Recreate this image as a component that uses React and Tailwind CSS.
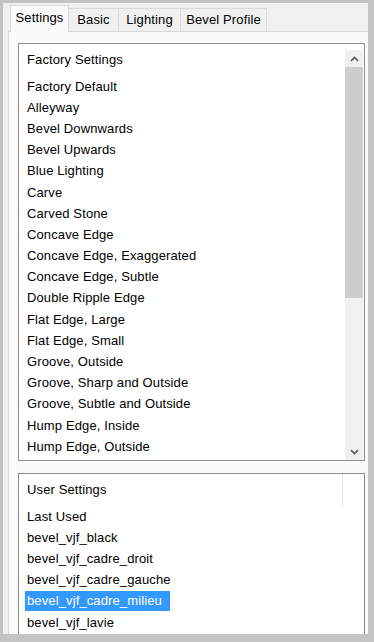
import React from "react";

const factory = [
  "Factory Default",
  "Alleyway",
  "Bevel Downwards",
  "Bevel Upwards",
  "Blue Lighting",
  "Carve",
  "Carved Stone",
  "Concave Edge",
  "Concave Edge, Exaggerated",
  "Concave Edge, Subtle",
  "Double Ripple Edge",
  "Flat Edge, Large",
  "Flat Edge, Small",
  "Groove, Outside",
  "Groove, Sharp and Outside",
  "Groove, Subtle and Outside",
  "Hump Edge, Inside",
  "Hump Edge, Outside",
];

const user = [
  "Last Used",
  "bevel_vjf_black",
  "bevel_vjf_cadre_droit",
  "bevel_vjf_cadre_gauche",
  "bevel_vjf_cadre_milieu",
  "bevel_vjf_lavie",
];

const tabs = ["Settings", "Basic", "Lighting", "Bevel Profile"];

function Chevron({ down }) {
  return (
    <svg width="9" height="6" viewBox="0 0 9 6" className="block">
      <path
        d={down ? "M1 1.2 L4.5 4.6 L8 1.2" : "M1 4.8 L4.5 1.4 L8 4.8"}
        fill="none"
        stroke="#606060"
        strokeWidth="1.8"
      />
    </svg>
  );
}

function Row({ text, selected }) {
  return (
    <div className="h-[21.2px] flex items-center pl-[6px] whitespace-nowrap">
      <span
        className={
          selected
            ? "bg-[#3399ff] text-white pl-[2px] pr-[8px] leading-[20px]"
            : "pl-[2px] leading-[20px]"
        }
      >
        {text}
      </span>
    </div>
  );
}

export default function App() {
  return (
    <div
      className="w-[374px] h-[642px] bg-[#c3c3c3] pl-[3px] pt-[3px] pr-[6px] pb-[8px] text-[13px] tracking-[0.12px] text-black"
      style={{ fontFamily: '"Liberation Sans", Arial, sans-serif' }}
    >
      <div className="h-full bg-[#f0f0f0] flex flex-col overflow-hidden">
        <div className="flex items-end pl-[7px] h-[28px] shrink-0">
          {tabs.map((t, i) =>
            i === 0 ? (
              <div
                key={t}
                className="relative z-10 -mb-px h-[27px] w-[59px] flex items-center justify-center pb-[3px] bg-[#fafafa] border border-b-0 border-[#d9d9d9]"
              >
                {t}
              </div>
            ) : (
              <div
                key={t}
                className="h-[23px] flex items-center justify-center border border-l-0 border-b-0 border-[#d9d9d9] bg-[#f0f0f0]"
                style={{ width: [0, 50, 62, 86][i] }}
              >
                {t}
              </div>
            )
          )}
        </div>

        <div className="ml-[5px] flex-1 min-h-0 bg-[#fafafa] border-l border-t border-[#d9d9d9] pl-[9px] pr-[3px] pt-[11px] flex flex-col gap-[12px] overflow-hidden">
          <div className="h-[418px] shrink-0 border border-[#8c8c8c] bg-white flex">
            <div className="flex-1 overflow-hidden">
              <div className="h-[32px] flex items-center pl-[8px]">Factory Settings</div>
              {factory.map((t) => (
                <Row key={t} text={t} />
              ))}
            </div>
            <div className="w-[18px] mr-[1px] pt-[6px] flex flex-col">
              <div className="h-[17px] bg-[#f0f0f0] flex items-center justify-center">
                <Chevron />
              </div>
              <div className="h-[231px] bg-[#cdcdcd]" />
              <div className="flex-1 bg-[#f0f0f0]" />
              <div className="h-[17px] bg-[#f0f0f0] flex items-center justify-center">
                <Chevron down />
              </div>
            </div>
          </div>

          <div className="h-[200px] shrink-0 border border-[#8c8c8c] bg-white">
            <div className="h-[32px] flex">
              <div className="flex-1 flex items-center pl-[8px]">User Settings</div>
              <div className="w-px bg-[#e5e5e5]" />
              <div className="w-[21px]" />
            </div>
            {user.map((t) => (
              <Row key={t} text={t} selected={t === "bevel_vjf_cadre_milieu"} />
            ))}
          </div>
        </div>
      </div>
    </div>
  );
}
